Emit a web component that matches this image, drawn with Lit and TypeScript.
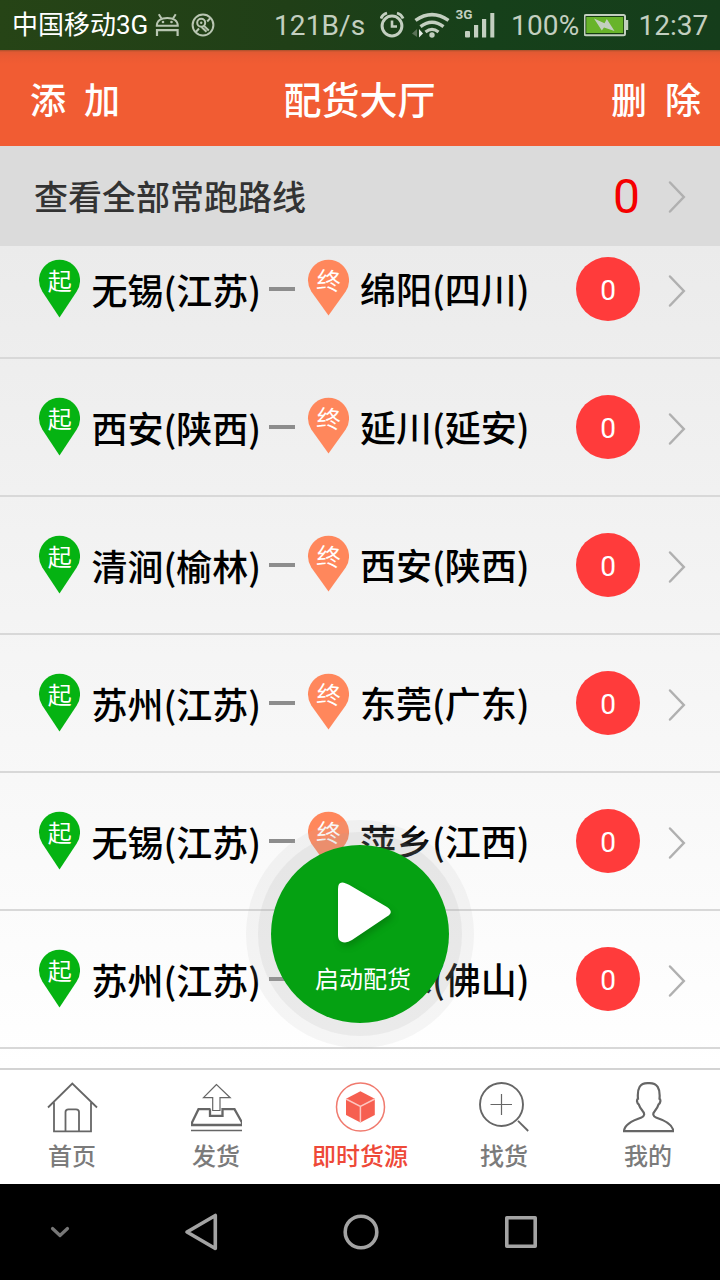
import { LitElement, html, css, svg } from "lit";
import { customElement, property } from "lit/decorators.js";

const CJK = css`"Noto Sans CJK SC", sans-serif`;

interface Route {
  from: string;
  to: string;
  count: number;
}

const ROUTES: Route[] = [
  { from: "无锡(江苏)", to: "绵阳(四川)", count: 0 },
  { from: "西安(陕西)", to: "延川(延安)", count: 0 },
  { from: "清涧(榆林)", to: "西安(陕西)", count: 0 },
  { from: "苏州(江苏)", to: "东莞(广东)", count: 0 },
  { from: "无锡(江苏)", to: "萍乡(江西)", count: 0 },
  { from: "苏州(江苏)", to: "三水(佛山)", count: 0 },
];

const chevron = html`<svg width="18" height="34" viewBox="0 0 18 34" fill="none">
  <path d="M2 2.5 L15.8 17 L2 31.5" stroke="#b0b0b0" stroke-width="2.5" stroke-linecap="round" />
</svg>`;

@customElement("status-bar")
class StatusBar extends LitElement {
  static styles = css`
    :host {
      display: block;
    }
    .bar {
      height: 50px;
      display: flex;
      align-items: center;
      background: linear-gradient(90deg, #264416 0%, #203f17 40%, #16401a 68%, #153d1b 100%);
      color: #c3cfc0;
      font: 400 28px/50px Roboto, ${CJK};
      white-space: pre;
    }
    .carrier {
      color: #fff;
      font-size: 26px;
      width: 143px;
      padding-left: 12px;
    }
    .speed {
      width: 106px;
      padding-left: 58px;
      letter-spacing: 0.1px;
      padding-top: 2px;
    }
    .pct {
      width: 73px;
      padding-top: 2px;
      letter-spacing: 0.2px;
    }
    .time {
      padding: 2px 0 0 8.5px;
    }
    svg {
      display: block;
      flex: none;
    }
  `;
  render() {
    return html`<div class="bar">
      <span class="carrier">中国移动3G</span>
      <svg width="61" height="50" viewBox="155 0 61 50" fill="none" stroke="#b9c6b2">
        <path d="M156.8 25.8 C156.8 20.5 161.5 17.9 167.3 17.9 C173 17.9 177.8 20.5 177.8 25.8 Z" stroke-width="2" />
        <path d="M161.5 18.6 L158.8 14.2 M173 18.6 L175.7 14.2" stroke-width="2" />
        <path d="M157 36 V30.2 H177.6 V36" stroke-width="2.2" />
        <circle cx="163" cy="22" r="1.3" fill="#b9c6b2" stroke="none" />
        <circle cx="171.5" cy="22" r="1.3" fill="#b9c6b2" stroke="none" />
        <circle cx="203" cy="25" r="10.4" stroke-width="2" />
        <circle cx="201.2" cy="22.8" r="4" stroke-width="2" />
        <circle cx="201.2" cy="22.8" r="1.2" fill="#b9c6b2" stroke="none" />
        <path d="M203.8 25.6 L208.8 30.5 M201.5 27 L206.5 31.8 M207.2 21.5 L210.5 17.8 M199 28.5 L195.8 32" stroke-width="2" />
      </svg>
      <span class="speed">121B/s</span>
      <svg width="131" height="50" viewBox="380 0 131 50" fill="none" stroke="#c3cfc0">
        <circle cx="392" cy="26" r="9.9" stroke-width="3" />
        <path d="M392 20.5 V26.5 H397" stroke-width="2.6" />
        <path d="M380.9 18.5 Q382.5 14.3 387 13 M397 13 Q401.5 14.3 403.1 18.5" stroke-width="2.8" />
        <path d="M415.5 20.4 Q432 8.8 448.5 20.4" stroke-width="3.6" />
        <path d="M420.5 26.6 Q432 18 443.5 26.6" stroke-width="3.4" />
        <path d="M425.5 32 Q432 26.8 438.5 32" stroke-width="3.2" />
        <circle cx="432" cy="35" r="2.7" fill="#c3cfc0" stroke="none" />
        <path d="M412 33.5 L417 29 V37 Z" fill="#5a7257" stroke="none" />
        <path d="M419 29 L423 33.5 L419 37.5 Z" fill="#e5ebe4" stroke="none" />
        <g fill="#c3cfc0" stroke="none">
          <rect x="465" y="31" width="5" height="6.5" rx="1" />
          <rect x="474" y="25" width="4.2" height="12.5" />
          <rect x="482" y="19" width="4.2" height="18.5" />
          <rect x="490.3" y="13" width="4" height="24.5" />
          <text x="455.5" y="19" font-family="Roboto" font-weight="700" font-size="13.5">3G</text>
        </g>
      </svg>
      <span class="pct">100%</span>
      <svg width="46" height="50" viewBox="584 0 46 50">
        <rect x="584.5" y="14.9" width="40.5" height="20.4" rx="1.5" fill="#173e12" stroke="#c3cfc0" stroke-width="2" />
        <rect x="586.3" y="17" width="36.9" height="16" fill="#68b42a" />
        <rect x="626" y="20" width="2.2" height="10" fill="#c3cfc0" />
        <path d="M594 18.5 L604.5 23.2 L606.8 19 L614.5 31 L604 27.4 L601.8 30.5 Z" fill="#c3cfc0" />
      </svg>
      <span class="time">12:37</span>
    </div>`;
  }
}

@customElement("route-row")
class RouteRow extends LitElement {
  @property({ attribute: false }) route!: Route;
  static styles = css`
    :host {
      display: block;
    }
    .row {
      box-sizing: border-box;
      height: 138px;
      padding: 36px 0 0 38px;
      border-bottom: 2px solid #d8d8d8;
      display: flex;
      align-items: flex-start;
      color: #000;
      font: 500 36px/64px ${CJK};
    }
    svg {
      display: block;
      flex: none;
    }
    .pin {
      margin-top: 2px;
    }
    .from {
      width: 178px;
      padding-left: 11.5px;
      box-sizing: border-box;
      white-space: nowrap;
    }
    .dash {
      width: 26px;
      height: 4px;
      background: #8d8d8d;
      margin: 30px 12px 0 11px;
    }
    .to {
      width: 227px;
      padding-left: 11px;
      box-sizing: border-box;
      margin-top: -1px;
      white-space: nowrap;
    }
    .count {
      width: 64px;
      height: 64px;
      border-radius: 50%;
      background: #ff3b3b;
      color: #fff;
      text-align: center;
      font: 400 28px/67px Roboto, sans-serif;
    }
    .go {
      margin: 17px 0 0 28px;
    }
  `;
  pin(label: string, color: string, h: number, tilt: number) {
    return svg`<svg class="pin" width="42" height="60" viewBox="0 0 42 60">
      <path d="M21.5 ${h} L4.3 32.5 A20.5 20.5 0 1 1 38.7 32.5 Z" fill=${color} />
      <text x="21.7" y="30.5" text-anchor="middle" fill="#fff" font-size="24" font-weight="400" font-family="Noto Sans CJK SC" transform="rotate(${tilt} 21 22)">${label}</text>
    </svg>`;
  }
  render() {
    const r = this.route;
    return html`<div class="row">
      ${this.pin("起", "#05b312", 58.5, 0)}
      <span class="from">${r.from}</span>
      <span class="dash"></span>
      ${this.pin("终", "#ff875c", 56.5, 5)}
      <span class="to">${r.to}</span>
      <span class="count">${r.count}</span>
      <span class="go">${chevron}</span>
    </div>`;
  }
}

const ICONS = {
  home: svg`<path d="M1 25.5 L25.3 1.5 L50 25.5 M7 20.5 V49.3 H44 V20.5" /><path d="M18.5 49 V30 Q18.5 27.3 21.5 27.3 H29 Q32 27.3 32 30 V49" />`,
  send: svg`<path d="M25.5 2.5 L12.5 15.7 H21.7 V28.5 H29 V15.7 H39.2 Z" stroke-width="1.2" /><path d="M19.5 27.2 H7.5 L1 40.5 V43 H51 V40.5 L43.5 27.2 H31.5 V33.8 H19 V27.2" stroke-width="2.3" /><path d="M0 48.4 H51" stroke-width="1.5" />`,
  cube: svg`<circle cx="25.5" cy="25" r="24" stroke="#f07a6e" stroke-width="1.5" /><path d="M25.4 9.3 L39.8 16.8 V33 L25.4 40.6 L11 33 V16.8 Z" fill="#f65f50" stroke="none" /><path d="M11 17 L25.4 24.3 L39.8 17 M25.4 24.3 V40.6" stroke="#fdc6c0" stroke-width="1.5" />`,
  find: svg`<circle cx="22.5" cy="22.5" r="21.5" stroke-width="1.9" /><path d="M22.5 12 V33 M11.5 22.5 H33" stroke-width="1.2" /><path d="M39 38.8 L49.2 49" />`,
  me: svg`<path d="M1 49.2 H50.3 C50 42 40.5 38 33 35.5 C30 34.5 29.5 31.5 31.5 29.5 C34 26.5 35 24.5 35.5 22.5 C37.5 21.5 38 17.5 36.5 16.8 C37.5 6 34 1.2 26.5 1.2 H24.5 C17 1.2 14 6 15 16.8 C13.3 17.5 14 21.5 15.8 22.5 C16.3 24.5 17.5 26.5 20 29.5 C21.8 31.5 21.5 34.5 18.5 35.5 C11 38 1.3 42 1 49.2 Z" stroke-width="2.2" />`,
};

@customElement("app-root")
class AppRoot extends LitElement {
  static styles = css`
    :host {
      display: block;
    }
    .screen {
      width: 720px;
      height: 1280px;
      display: flex;
      flex-direction: column;
      overflow: hidden;
      background: #fff;
      font-family: ${CJK};
      font-weight: 500;
    }
    svg {
      display: block;
      flex: none;
    }
    .head {
      flex: none;
      height: 96px;
      display: grid;
      grid-template-columns: 1fr auto 1fr;
      align-items: center;
      background: linear-gradient(#a8502c 0, #e05a33 2px, #ea5a33 6px, #f15c33 14px);
      color: #fff;
      font-size: 36px;
      line-height: 96px;
      padding: 0 19px 0 30px;
    }
    .head span {
      white-space: pre;
      word-spacing: 10px;
    }
    .head .title {
      font-size: 38px;
      padding-right: 12px;
    }
    .head .right {
      text-align: right;
    }
    .all {
      flex: none;
      height: 100px;
      display: flex;
      align-items: center;
      background: #dbdbdb;
      color: #333;
      font-size: 34px;
      line-height: 102px;
      padding-left: 34px;
    }
    .all .label {
      flex: 1;
    }
    .all .num {
      color: #f50000;
      font: 400 48px/102px Roboto, sans-serif;
      margin-right: 28px;
      padding-top: 2px;
    }
    .all .go {
      margin: 1px 34px 0 0;
    }
    .list {
      flex: 1;
      min-height: 0;
      overflow: hidden;
      background: linear-gradient(#ebebeb, #ffffff);
    }
    .scroll {
      margin-top: -25px;
    }
    .tabs {
      flex: none;
      box-sizing: border-box;
      height: 116px;
      border-top: 2px solid #d3d3d3;
      background: #fff;
      display: grid;
      grid-template-columns: repeat(5, 1fr);
    }
    .tab {
      display: flex;
      flex-direction: column;
      align-items: center;
      padding-top: 12px;
      color: #7b7b7b;
      font-size: 24px;
      line-height: 36px;
      gap: 4px;
    }
    .tab.on {
      color: #ee4938;
    }
    .keys {
      flex: none;
      height: 96px;
      background: #000;
    }
    .start {
      position: absolute;
      left: 246px;
      top: 820px;
      width: 228px;
      height: 228px;
      box-sizing: border-box;
      border-radius: 50%;
      padding: 12px;
      background: rgba(180, 180, 180, 0.12);
    }
    .ring {
      box-sizing: border-box;
      width: 204px;
      height: 204px;
      border-radius: 50%;
      padding: 13px;
      background: rgba(160, 160, 160, 0.13);
    }
    .disc {
      width: 178px;
      height: 178px;
      border-radius: 50%;
      background: #05a112;
      color: #fff;
      display: flex;
      flex-direction: column;
      align-items: center;
      font-size: 24px;
      line-height: 36px;
      font-weight: 400;
    }
    .disc svg {
      margin: 34px 0 0 10px;
      filter: drop-shadow(2px 4px 3px rgba(0, 50, 0, 0.25));
    }
    .disc span {
      margin: 17px 0 0 6px;
    }
  `;
  tab(icon: keyof typeof ICONS, label: string, on = false) {
    return html`<div class="tab ${on ? "on" : ""}">
      <svg width="51" height="51" viewBox="0 0 51 51" fill="none" stroke="#666" stroke-width="1.8">${ICONS[icon]}</svg>
      <span>${label}</span>
    </div>`;
  }
  render() {
    return html`<div class="screen">
      <status-bar></status-bar>
      <div class="head">
        <span>添 加</span><span class="title">配货大厅</span><span class="right">删 除</span>
      </div>
      <div class="all">
        <span class="label">查看全部常跑路线</span><span class="num">0</span><span class="go">${chevron}</span>
      </div>
      <div class="list">
        <div class="scroll">${ROUTES.map((r) => html`<route-row .route=${r}></route-row>`)}</div>
      </div>
      <div class="tabs">
        ${this.tab("home", "首页")} ${this.tab("send", "发货")} ${this.tab("cube", "即时货源", true)}
        ${this.tab("find", "找货")} ${this.tab("me", "我的")}
      </div>
      <div class="keys">
        <svg width="720" height="96" viewBox="0 0 720 96" fill="none" stroke="#a3a3a3" stroke-width="3.6" stroke-linejoin="round">
          <path d="M52.5 44.5 L60 51.5 L67.5 44.5" stroke="#777" stroke-width="3.2" stroke-linecap="round" />
          <path d="M215.3 31.5 V64.5 L187 48 Z" />
          <circle cx="361" cy="48" r="15.8" />
          <rect x="506.8" y="33.8" width="28.4" height="28.4" />
        </svg>
      </div>
      <div class="start">
        <div class="ring">
          <div class="disc">
            <svg width="56" height="64" viewBox="0 0 56 64">
              <path d="M1 10 Q1 1 9 4.5 Q12 5.5 15 7.5 L50 28 Q57.5 33 50 37.5 L15 61 Q9 65 4 62.5 Q1 61 1 56 Z" fill="#fff" />
            </svg>
            <span>启动配货</span>
          </div>
        </div>
      </div>
    </div>`;
  }
}
